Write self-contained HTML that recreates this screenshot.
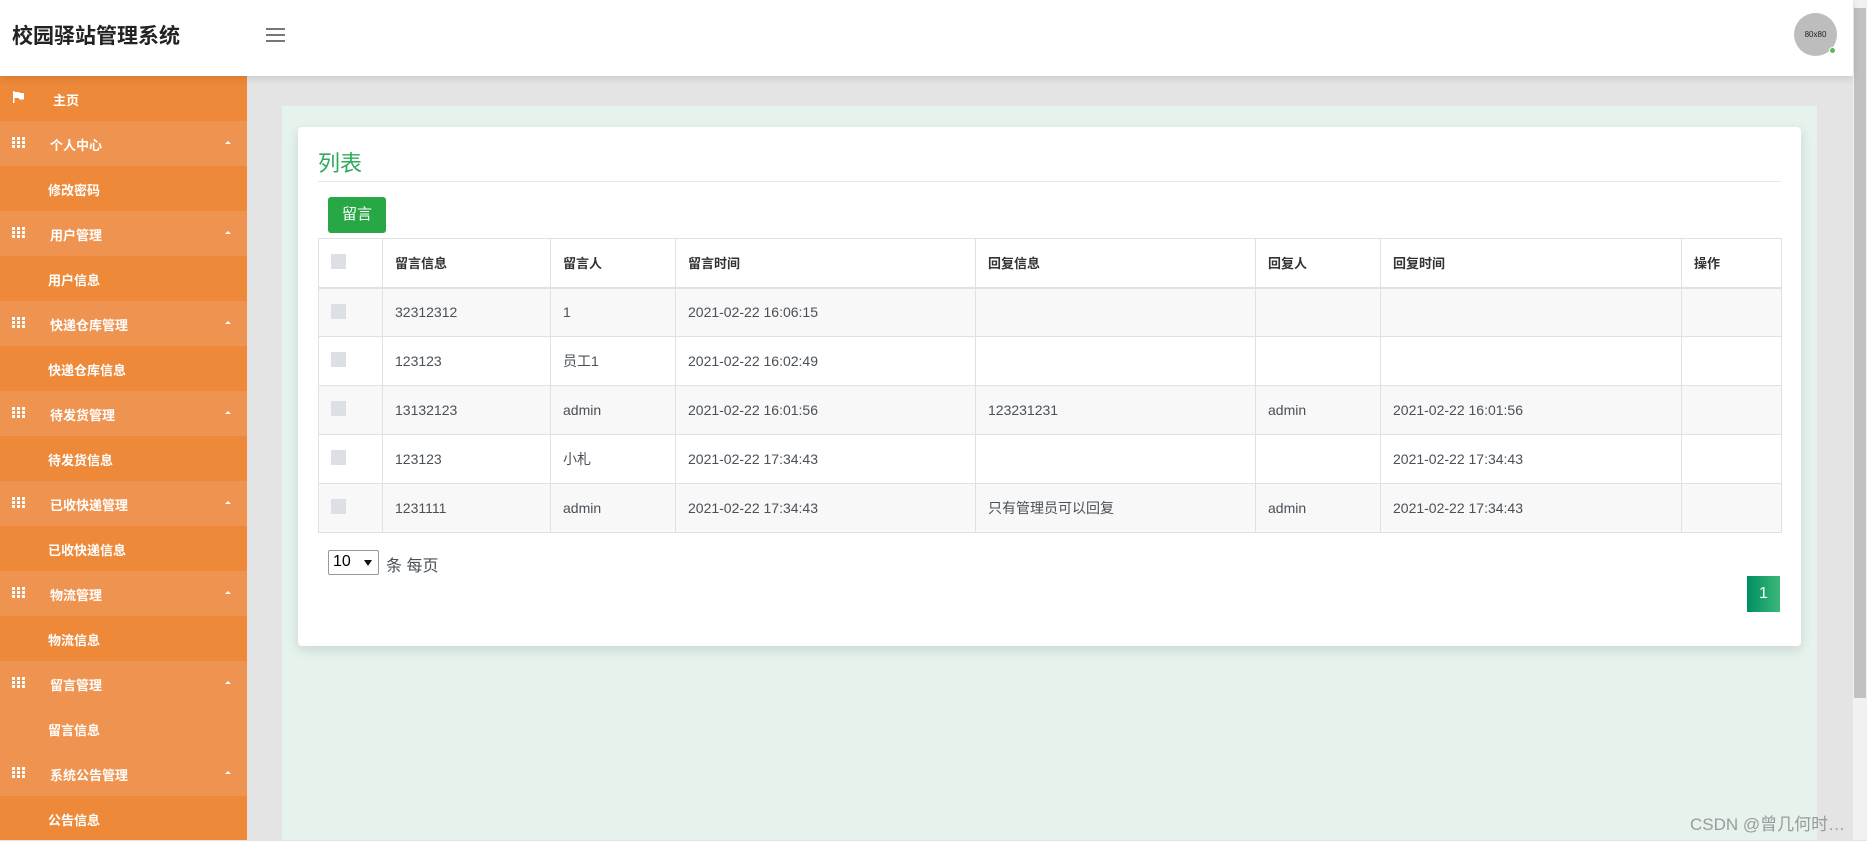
<!DOCTYPE html>
<html><head><meta charset="utf-8"><style>
*{margin:0;padding:0;box-sizing:border-box}
body{width:1867px;height:840px;overflow:hidden;font-family:"Liberation Sans","Noto Sans CJK SC",sans-serif;background:#e4e4e4;position:relative}
.hdr{position:absolute;left:0;top:0;width:1853px;height:76px;background:#fff;box-shadow:0 2px 8px rgba(0,0,0,.12);z-index:3}
.hdr .t{position:absolute;left:12px;top:20px;font-size:21px;font-weight:bold;color:#222}
.hb{position:absolute;left:266px;top:28px;width:19px}
.hb i{display:block;height:2px;background:#777;margin-bottom:4px}
.av{position:absolute;left:1794px;top:13px;width:43px;height:43px;border-radius:50%;background:#bdbdbd;font-size:8px;color:#222;text-align:center;line-height:43px}
.dot{position:absolute;left:1829px;top:47px;width:7px;height:7px;border-radius:50%;background:#5cb85c;border:1px solid #fff}
.sb{position:absolute;left:0;top:76px;width:247px;height:764px;background:#ed8939;z-index:2}
.it{height:45px;position:relative;color:#fff;font-size:13px;font-weight:bold}
.it.l{background:#ef9350}
.it span{position:absolute;top:14px}
.grid{position:absolute;left:12px;top:16px;width:13px;height:11px;background:
linear-gradient(90deg,#fff 3px,transparent 3px,transparent 5px,#fff 5px,#fff 8px,transparent 8px,transparent 10px,#fff 10px);}
.grid:after{content:"";position:absolute;left:0;top:3px;width:13px;height:1px;background:#ef9350;box-shadow:0 4px 0 #ef9350}
.car{position:absolute;left:225px;top:20px;border-left:3px solid transparent;border-right:3px solid transparent;border-bottom:3px solid #fff}
.scr{position:absolute;left:1853px;top:0;width:14px;height:840px;background:#f1f1f1}
.scr i{position:absolute;left:1px;top:8px;width:12px;height:248px;background:#c1c1c1}
.gp{position:absolute;left:282px;top:106px;width:1535px;height:734px;background:#e6f2ec}
.card{position:absolute;left:298px;top:127px;width:1503px;height:519px;background:#fff;border-radius:4px;box-shadow:0 4px 12px rgba(0,0,0,.12)}
.tt{position:absolute;left:318px;top:146px;font-size:22px;color:#2eaa5a}
.ln{position:absolute;left:318px;top:181px;width:1463px;height:1px;background:#e8e8e8}
.btn{position:absolute;left:328px;top:197px;width:58px;height:36px;background:#28a745;border-radius:3px;color:#fff;font-size:15px;text-align:center;line-height:36px}
table{position:absolute;left:318px;top:238px;border-collapse:collapse;table-layout:fixed;width:1463px;font-size:14px;color:#495057}
td,th{border:1px solid #dee2e6;height:49px;padding:0 12px;text-align:left;white-space:nowrap}
th{font-size:13px;font-weight:bold;color:#333;border-bottom:2px solid #dee2e6}
tr:nth-child(even) td{background:#f8f8f8}
.cb{display:inline-block;width:15px;height:15px;background:#dcdfe4;margin-left:0;vertical-align:middle;position:relative;top:-2px}
.sel{position:absolute;left:328px;top:550px;width:51px;height:25px;border:1px solid #999;border-radius:2px;font-size:16px;color:#000;padding:2px 0 0 4px}
.sel:after{content:"";position:absolute;right:6px;top:9px;border-left:4px solid transparent;border-right:4px solid transparent;border-top:6px solid #111}
.per{position:absolute;left:386px;top:552px;font-size:16px;color:#495057}
.pg{position:absolute;left:1747px;top:576px;width:33px;height:36px;background:linear-gradient(90deg,#008f62,#3cb878);color:#fff;text-align:center;line-height:36px;font-size:16px}
.wm{position:absolute;left:1690px;top:810px;font-size:17px;color:#9a9a9a}
</style></head><body>
<div class="hdr"><div class="t">校园驿站管理系统</div><div class="hb"><i></i><i></i><i></i></div><div class="av">80x80</div><div class="dot"></div></div>
<div class="sb">
<div class="it"><svg style="position:absolute;left:12px;top:15px" width="12" height="12" viewBox="0 0 12 12"><path d="M1 0v12h1.5V7h4l1 1.5H12V2H8L7 1H2.5V0z" fill="#fff"/></svg><span style="left:53px">主页</span></div>
<div class="it l"><i class="grid"></i><span style="left:50px">个人中心</span><i class="car"></i></div>
<div class="it"><span style="left:48px">修改密码</span></div>
<div class="it l"><i class="grid"></i><span style="left:50px">用户管理</span><i class="car"></i></div>
<div class="it"><span style="left:48px">用户信息</span></div>
<div class="it l"><i class="grid"></i><span style="left:50px">快递仓库管理</span><i class="car"></i></div>
<div class="it"><span style="left:48px">快递仓库信息</span></div>
<div class="it l"><i class="grid"></i><span style="left:50px">待发货管理</span><i class="car"></i></div>
<div class="it"><span style="left:48px">待发货信息</span></div>
<div class="it l"><i class="grid"></i><span style="left:50px">已收快递管理</span><i class="car"></i></div>
<div class="it"><span style="left:48px">已收快递信息</span></div>
<div class="it l"><i class="grid"></i><span style="left:50px">物流管理</span><i class="car"></i></div>
<div class="it"><span style="left:48px">物流信息</span></div>
<div class="it l"><i class="grid"></i><span style="left:50px">留言管理</span><i class="car"></i></div>
<div class="it l"><span style="left:48px">留言信息</span></div>
<div class="it l"><i class="grid"></i><span style="left:50px">系统公告管理</span><i class="car"></i></div>
<div class="it"><span style="left:48px">公告信息</span></div>
</div>
<div class="gp"></div>
<div class="card"></div>
<div class="tt">列表</div><div class="ln"></div>
<div class="btn">留言</div>
<table>
<colgroup><col style="width:64px"><col style="width:168px"><col style="width:125px"><col style="width:300px"><col style="width:280px"><col style="width:125px"><col style="width:301px"><col style="width:100px"></colgroup>
<tr><th><span class="cb"></span></th><th>留言信息</th><th>留言人</th><th>留言时间</th><th>回复信息</th><th>回复人</th><th>回复时间</th><th>操作</th></tr>
<tr><td><span class="cb"></span></td><td>32312312</td><td>1</td><td>2021-02-22 16:06:15</td><td></td><td></td><td></td><td></td></tr>
<tr><td><span class="cb"></span></td><td>123123</td><td>员工1</td><td>2021-02-22 16:02:49</td><td></td><td></td><td></td><td></td></tr>
<tr><td><span class="cb"></span></td><td>13132123</td><td>admin</td><td>2021-02-22 16:01:56</td><td>123231231</td><td>admin</td><td>2021-02-22 16:01:56</td><td></td></tr>
<tr><td><span class="cb"></span></td><td>123123</td><td>小札</td><td>2021-02-22 17:34:43</td><td></td><td></td><td>2021-02-22 17:34:43</td><td></td></tr>
<tr><td><span class="cb"></span></td><td>1231111</td><td>admin</td><td>2021-02-22 17:34:43</td><td>只有管理员可以回复</td><td>admin</td><td>2021-02-22 17:34:43</td><td></td></tr>
</table>
<div class="sel">10</div><div class="per">条 每页</div>
<div class="pg">1</div>
<div class="wm">CSDN @曾几何时…</div>
<div class="scr"><i style="height:690px"></i></div>
</body></html>
